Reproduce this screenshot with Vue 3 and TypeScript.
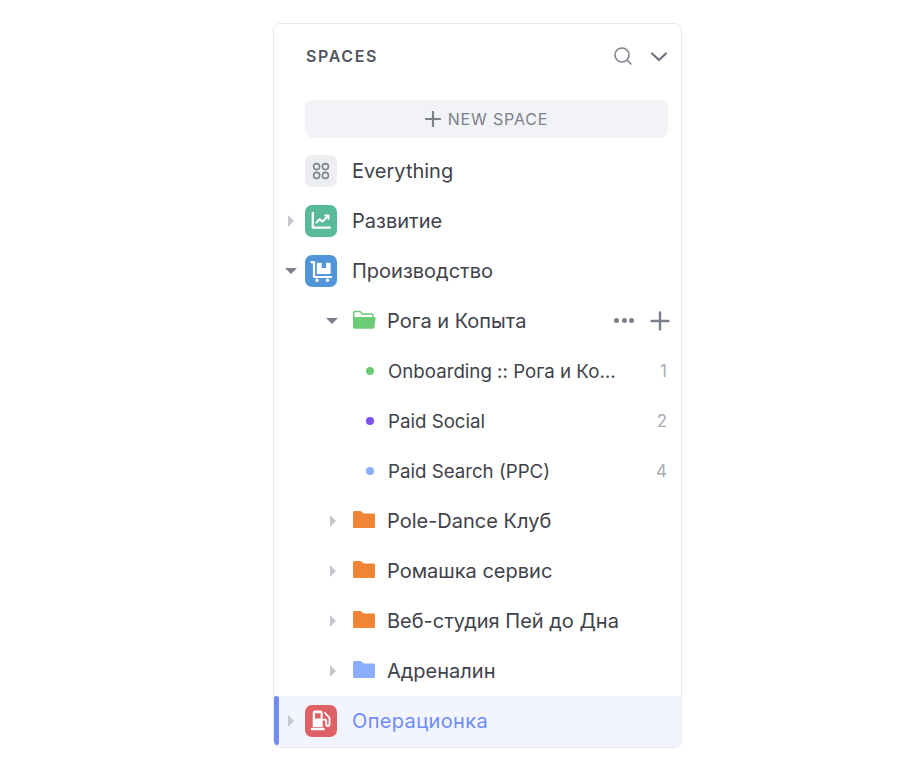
<script setup lang="ts">
interface Folder { name: string; color: string; open?: boolean }
interface List { name: string; color: string; count: number }

const lists: List[] = [
  { name: 'Onboarding :: Рога и Копыта', color: '#6bcb77', count: 1 },
  { name: 'Paid Social', color: '#7b4ff0', count: 2 },
  { name: 'Paid Search (PPC)', color: '#8aaefc', count: 4 },
]
const folders: Folder[] = [
  { name: 'Pole-Dance Клуб', color: '#f28435' },
  { name: 'Ромашка сервис', color: '#f28435' },
  { name: 'Веб-студия Пей до Дна', color: '#f28435' },
  { name: 'Адреналин', color: '#8aaefc' },
]
</script>

<template>
  <div class="page">
    <aside class="card">
      <header class="head">
        <span class="title">SPACES</span>
        <svg class="search" width="20" height="20" viewBox="0 0 20 20" fill="none" stroke="#7f838d" stroke-width="1.6" stroke-linecap="round">
          <circle cx="9" cy="9" r="7" />
          <path d="M14.2 14.2 18 18" />
        </svg>
        <svg class="chev" width="18" height="12" viewBox="0 0 18 12" fill="none" stroke="#6f737d" stroke-width="2.2" stroke-linecap="round" stroke-linejoin="round">
          <path d="M2 3.500 9 10l7-6.500" />
        </svg>
      </header>

      <button class="new">
        <svg width="16" height="16" viewBox="0 0 16 16" stroke="#7c808a" stroke-width="2.2" stroke-linecap="round">
          <path d="M8 1v14M1 8h14" />
        </svg>
        <span>NEW SPACE</span>
      </button>

      <div class="row space">
        <span class="caret"></span>
        <span class="tile grey">
          <svg width="20" height="20" viewBox="0 0 20 20" fill="none" stroke="#7f838d" stroke-width="1.6">
            <circle cx="5.6" cy="5.6" r="3" /><circle cx="14.4" cy="5.6" r="3" />
            <circle cx="5.6" cy="14.4" r="3" /><circle cx="14.4" cy="14.4" r="3" />
          </svg>
        </span>
        <span class="label">Everything</span>
      </div>

      <div class="row space">
        <span class="caret"><i class="tri right"></i></span>
        <span class="tile green">
          <svg width="20" height="20" viewBox="0 0 20 20" fill="none" stroke="#fff" stroke-linecap="round" stroke-linejoin="round">
            <path d="M1.800 2v14.600h17" stroke-width="2.400" />
            <path d="M5.500 11.500l3-3.200 3 2.300 5.200-5.400" stroke-width="2" />
            <path d="M14 4.500h3.600v3.400" stroke-width="1.800" />
          </svg>
        </span>
        <span class="label">Развитие</span>
      </div>

      <div class="row space">
        <span class="caret"><i class="tri down"></i></span>
        <span class="tile blue">
          <svg width="22" height="22" viewBox="0 0 22 22" fill="none">
            <path d="M1.500 2.200H4V17h17.500" stroke="#fff" stroke-width="2.200" stroke-linecap="round" stroke-linejoin="round" />
            <path d="M6.800 3.800a1 1 0 0 1 1-1h3.900V8h4.300V2.800h3.600a1 1 0 0 1 1 1V14H6.800z" fill="#fff" />
            <circle cx="7" cy="20.300" r="1.700" fill="#fff" /><circle cx="17.500" cy="20.300" r="1.700" fill="#fff" />
          </svg>
        </span>
        <span class="label">Производство</span>
      </div>

      <div class="row folder">
        <span class="caret sub"><i class="tri down"></i></span>
        <svg class="ficon" width="24" height="20" viewBox="0 0 24 20">
          <path d="M1.700 14V2.800c0-.8.600-1.400 1.400-1.400h4.200c.5 0 .9.200 1.200.5L10.200 4h9.400c.8 0 1.400.6 1.400 1.400V8" fill="none" stroke="#6bcb77" stroke-width="1.500" />
          <path d="M1 8.400C1 7.600 1.600 7 2.400 7h19.800c.9 0 1.500.7 1.400 1.600l-1.200 8.600c-.1.900-.9 1.600-1.800 1.600H2.800c-1 0-1.800-.8-1.800-1.800z" fill="#6bcb77" />
        </svg>
        <span class="label">Рога и Копыта</span>
        <span class="dots"><i></i><i></i><i></i></span>
        <svg class="plus" width="20" height="20" viewBox="0 0 20 20" stroke="#7c808a" stroke-width="2.400" stroke-linecap="round">
          <path d="M10 1.500v17M1.500 10h17" />
        </svg>
      </div>

      <div v-for="l in lists" :key="l.name" class="row list">
        <span class="dot" :style="{ background: l.color }"></span>
        <span class="label ellipsis">{{ l.name }}</span>
        <span class="count">{{ l.count }}</span>
      </div>

      <div v-for="f in folders" :key="f.name" class="row folder">
        <span class="caret sub"><i class="tri right"></i></span>
        <svg class="ficon" width="24" height="20" viewBox="0 0 24 20">
          <path d="M1 2.600C1 1.700 1.700 1 2.600 1h5.600c.5 0 .9.200 1.300.5l2.100 2h9.800c.9 0 1.600.7 1.600 1.600v11.300c0 .9-.7 1.600-1.600 1.600H2.600c-.9 0-1.600-.7-1.600-1.600z" :fill="f.color" />
        </svg>
        <span class="label">{{ f.name }}</span>
      </div>

      <div class="row space active">
        <span class="caret"><i class="tri right"></i></span>
        <span class="tile red">
          <svg class="fuel" width="22" height="22" viewBox="0 0 22 22" fill="none">
            <path fill-rule="evenodd" clip-rule="evenodd" d="M2.700 2.800A2.300 2.300 0 0 1 5 .500h5.400a2.300 2.300 0 0 1 2.300 2.300V17h-10zM5 3.200v5.300h5.600V3.200z" fill="#fff" />
            <path d="M2 19h11.500" stroke="#fff" stroke-width="2.600" stroke-linecap="round" />
            <path d="M15 2.800l4.500 5v6.400c0 2.200-3.300 2.200-3.300 0V11c0-.8-.6-1.400-1.400-1.400h-1.500" stroke="#fff" stroke-width="1.800" stroke-linecap="round" stroke-linejoin="round" />
          </svg>
        </span>
        <span class="label">Операционка</span>
      </div>
    </aside>
  </div>
</template>

<style>
html, body { margin: 0; background: #fff; }
</style>

<style scoped>
.page {
  width: 902px;
  height: 760px;
  padding: 23px 0 0 273px;
  box-sizing: border-box;
  font-family: Inter, "Liberation Sans", sans-serif;
}
.card {
  width: 409px;
  height: 725px;
  box-sizing: border-box;
  border: 1px solid #e9eaee;
  border-radius: 7px;
  display: flex;
  flex-direction: column;
  overflow: hidden;
}
.head {
  display: flex;
  align-items: center;
  height: 64px;
  padding: 0 13px 0 32px;
  flex: none;
}
.title {
  font-size: 16px;
  font-weight: 600;
  letter-spacing: 1.6px;
  color: #53565f;
  flex: 1;
}
.search { margin-right: 17px; }
.new {
  flex: none;
  margin: 12px 13px 8px 31px;
  height: 38px;
  border: 0;
  border-radius: 8px;
  background: #f2f3f7;
  display: flex;
  align-items: center;
  justify-content: center;
  gap: 7px;
  font: 400 16px Inter, "Liberation Sans", sans-serif;
  letter-spacing: 0.85px;
  color: #7c808a;
  padding: 0;
}
.row {
  flex: none;
  height: 50px;
  display: flex;
  align-items: center;
  position: relative;
  color: #3f424b;
  font-size: 20px;
}
.label { white-space: nowrap; }
.caret {
  width: 31px;
  display: flex;
  justify-content: center;
  flex: none;
  padding-left: 2px;
  box-sizing: border-box;
}
.tri { display: block; width: 0; height: 0; }
.tri.right {
  border-left: 6px solid #c5c7cd;
  border-top: 6px solid transparent;
  border-bottom: 6px solid transparent;
  margin-left: 1px;
}
.tri.down {
  border-top: 6px solid #7c808a;
  border-left: 6px solid transparent;
  border-right: 6px solid transparent;
}
.tile {
  width: 32px;
  height: 32px;
  border-radius: 7px;
  display: flex;
  align-items: center;
  justify-content: center;
  margin-right: 15px;
  flex: none;
}
.tile.grey { background: #eceef2; }
.tile.green { background: #58b99b; }
.tile.blue { background: #5196d9; }
.tile.red { background: #de6265; }
.folder .caret.sub { width: 40px; margin-left: 38px; padding-left: 0; }
.ficon { margin-right: 11px; flex: none; margin-top: -3px; }
.folder .label { flex: 1; }
.dots { display: flex; gap: 2.5px; margin-right: 16px; margin-top: -1px; }
.dots i { width: 5px; height: 5px; border-radius: 50%; background: #7c808a; display: block; }
.plus { margin-right: 11px; margin-top: -1px; }
.list { padding-left: 92px; padding-right: 14px; }
.dot { width: 8px; height: 8px; border-radius: 50%; margin-right: 14px; flex: none; margin-top: -1px; }
.ellipsis {
  width: 229px;
  overflow: hidden;
  text-overflow: ellipsis;
}
.list .label { font-size: 18.7px; }
.count {
  margin-left: auto;
  color: #a9acb3;
  font-size: 17px;
}
.active {
  background: #f2f5fd;
  height: 51px;
  padding-bottom: 1px;
  box-sizing: border-box;
  color: #6f8cf7;
}
.active .label { letter-spacing: 0.36px; }
.active::before {
  content: "";
  position: absolute;
  left: 0;
  top: 0;
  bottom: 2px;
  width: 5px;
  border-radius: 3px;
  background: #6f8cf7;
}
</style>
